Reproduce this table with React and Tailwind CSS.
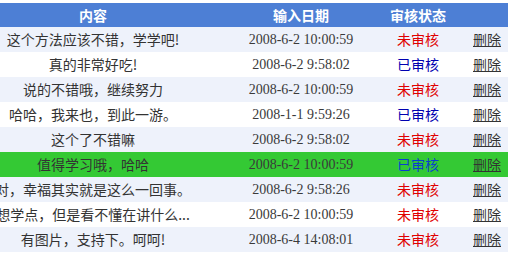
import React from 'react';

const rows = [
    { text: '这个方法应该不错，学学吧!', date: '2008-6-2 10:00:59', ok: false },
    { text: '真的非常好吃!', date: '2008-6-2 9:58:02', ok: true },
    { text: '说的不错哦，继续努力', date: '2008-6-2 10:00:59', ok: false },
    { text: '哈哈，我来也，到此一游。', date: '2008-1-1 9:59:26', ok: true },
    { text: '这个了不错嘛', date: '2008-6-2 9:58:02', ok: false },
    { text: '值得学习哦，哈哈', date: '2008-6-2 10:00:59', ok: true, hot: true },
    { text: '对，幸福其实就是这么一回事。', date: '2008-6-2 9:58:26', ok: false },
    { text: '想学点，但是看不懂在讲什么...', date: '2008-6-2 10:00:59', ok: false },
    { text: '有图片，支持下。呵呵!', date: '2008-6-4 14:08:01', ok: false },
];

const cjk = "font-['Noto_Sans_CJK_SC',sans-serif]";

const App = () => {
    return (
        <div className="w-[513px] h-[253px] overflow-hidden bg-white pt-[3px]">
            <div className="ml-[-46px] w-[554px]">
                <div className={`grid grid-cols-[278px_138px_96px_42px] h-[24px] items-center bg-[#4d7fd5] text-white font-bold text-[14px] ${cjk}`}>
                    <div className="text-center">内容</div>
                    <div className="text-center">输入日期</div>
                    <div className="text-center">审核状态</div>
                    <div></div>
                </div>
                {rows.map((r, i) => (
                    <div
                        key={i}
                        className={`grid grid-cols-[278px_138px_96px_42px] h-[25px] items-center ${r.hot ? 'bg-[#34c934]' : i % 2 === 0 ? 'bg-[#eef2fb]' : 'bg-white'}`}
                    >
                        <div className={`flex justify-center whitespace-nowrap text-[14px] text-[#333] ${cjk}`}>{r.text}</div>
                        <div className="text-center text-[14px] text-[#3a3a3a] font-['Liberation_Serif',serif]">{r.date}</div>
                        <div className={`text-center text-[14px] ${cjk} ${r.ok ? (r.hot ? 'text-[#0a3fd0]' : 'text-[#0000b0]') : 'text-[#e00000]'}`}>
                            {r.ok ? '已审核' : '未审核'}
                        </div>
                        <div className={`text-center text-[14px] text-[#333] underline ${cjk}`}>删除</div>
                    </div>
                ))}
            </div>
        </div>
    );
};

export default App;
